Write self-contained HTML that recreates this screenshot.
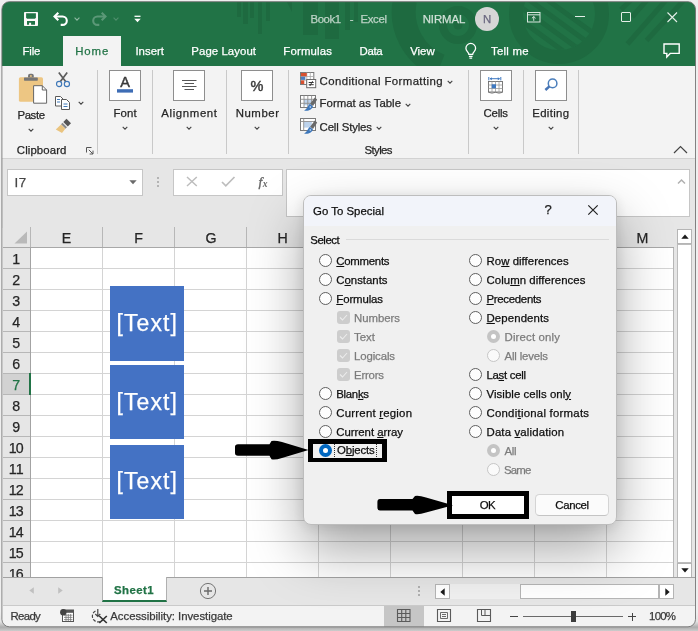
<!DOCTYPE html>
<html lang="en"><head><meta charset="utf-8"><title>Book1 - Excel</title>
<style>
html,body{margin:0;padding:0;}
body{width:698px;height:631px;overflow:hidden;background:#f4f4f4;font-family:"Liberation Sans",sans-serif;position:relative;}
#win{position:absolute;left:0;top:0;width:698px;height:631px;overflow:hidden;will-change:transform;}
.a{position:absolute;box-sizing:border-box;}
.t{white-space:pre;-webkit-text-stroke:0.25px;}
u{text-decoration:underline;text-underline-offset:1px;text-decoration-thickness:1px;}
svg{position:absolute;overflow:visible;}

</style></head>
<body>
<div id="win">
<div class="a" style="left:0px;top:0px;width:698px;height:66px;background:#217346;"></div>
<svg style="left:0;top:0" width="698" height="66" viewBox="0 0 698 66"><defs><clipPath id="rc"><circle cx="559" cy="14" r="36"/></clipPath></defs><g fill="#1e6a40" stroke="none">
<rect x="237" y="0" width="4" height="17"/><rect x="243" y="0" width="5" height="24"/><rect x="250" y="0" width="4" height="18"/><rect x="258" y="0" width="4" height="34"/><rect x="266" y="0" width="4" height="21"/>
<path d="M286 0H292V12Z"/>
<rect x="303" y="0" width="15" height="35"/><rect x="325" y="0" width="14" height="39"/><rect x="345" y="0" width="5" height="30"/><rect x="354" y="0" width="4" height="22"/>
<circle cx="458" cy="25" r="4.500"/>
</g>
<g fill="none" stroke="#1e6a40">
<circle cx="458" cy="25" r="15" stroke-width="8"/>
<path d="M405 0A58 58 0 0 0 440 66" stroke-width="24"/>
<circle cx="559" cy="14" r="43" stroke-width="14"/>
<g stroke-width="5" clip-path="url(#rc)"><path d="M500 -8 L580 50"/><path d="M510 -14 L590 44"/><path d="M520 -20 L600 38"/><path d="M490 -2 L570 56"/><path d="M480 4 L560 62"/></g>
<g stroke-width="5"><path d="M666 0L627.500 44"/><path d="M684 0L646.500 40.500"/><path d="M647 0L632 17"/><path d="M632 -1L621 9.500"/></g>
</g></svg>
<svg style="left:24px;top:12px" width="14" height="14" viewBox="0 0 14 14"><rect x="0" y="0" width="14" height="14" rx=".8" fill="#fbf8f8"/><path d="M2.100 1.200H11.900V5.500L11 6.700H3L2.100 5.500Z" fill="#217346"/><path d="M3 8.900H11V12.700H7.100V10.800H5.100V12.700H3Z" fill="#217346"/></svg>
<svg style="left:52px;top:10px" width="18" height="17" viewBox="0 0 18 17"><g fill="none" stroke="#fff" stroke-width="2.100"><path d="M6.300 2.700L2.500 6.500L6.300 10.300"/><path d="M3 6.500H10.600A4.200 4.200 0 0 1 10.600 14.900H8.700"/></g></svg>
<svg style="left:73px;top:15.500px" width="8" height="6" viewBox="0 0 8 6"><path d="M1.600 1.700L4 4.100L6.400 1.700" fill="none" stroke="#8fb9a2" stroke-width="1.100"/></svg>
<svg style="left:90px;top:10px" width="18" height="17" viewBox="0 0 18 17"><g fill="none" stroke="#5b9877" stroke-width="2.100"><path d="M11.700 2.700L15.500 6.500L11.700 10.300"/><path d="M15 6.500H7.400A4.200 4.200 0 0 0 7.400 14.900H9.300"/></g></svg>
<svg style="left:112px;top:15.500px" width="8" height="6" viewBox="0 0 8 6"><path d="M1.600 1.700L4 4.100L6.400 1.700" fill="none" stroke="#4f8e6c" stroke-width="1.100"/></svg>
<svg style="left:134px;top:15px" width="7" height="8" viewBox="0 0 7 8"><path d="M0.500 1.300H6.500" stroke="#fff" stroke-width="1.300"/><path d="M0.300 3.800H6.700L3.500 7.200Z" fill="#fff"/></svg>
<div class="a t" style="left:310.5px;top:12px;height:15px;line-height:15px;font-size:11.4px;color:#bdd3c6;letter-spacing:-0.453px;">Book1</div>
<div class="a t" style="left:349.8515625px;top:12px;height:15px;line-height:15px;font-size:11.4px;color:#bdd3c6;letter-spacing:0.000px;">-</div>
<div class="a t" style="left:360.5px;top:12px;height:15px;line-height:15px;font-size:11.4px;color:#bdd3c6;letter-spacing:-0.340px;">Excel</div>
<div class="a t" style="left:422.7px;top:12px;height:15px;line-height:15px;font-size:11.4px;color:#cfe0d6;letter-spacing:-0.089px;">NIRMAL</div>
<div class="a" style="left:475px;top:7px;width:24px;height:24px;background:#d6d6d6;border-radius:50%;"></div>
<div class="a t" style="left:482.8828125px;top:12px;height:15px;line-height:15px;font-size:11.4px;color:#6b6880;letter-spacing:0.000px;">N</div>
<svg style="left:527px;top:12px" width="14" height="11" viewBox="0 0 14 11"><g fill="none" stroke="#d8e6de" stroke-width="1"><rect x="0.500" y="0.500" width="12.500" height="9.500"/><path d="M0.500 2.800H13"/><path d="M6.750 8.800V4.600M4.900 6.300L6.750 4.500L8.600 6.300"/></g></svg>
<div class="a" style="left:575px;top:16px;width:10px;height:1px;background:#e4eee8;"></div>
<div class="a" style="left:621px;top:12px;width:10px;height:10px;border:1px solid #e4eee8;border-radius:1px;"></div>
<svg style="left:667px;top:12px" width="11" height="11" viewBox="0 0 11 11"><path d="M0.500 0.500L10 10M10 0.500L0.500 10" stroke="#e4eee8" stroke-width="1.100" fill="none"/></svg>
<div class="a" style="left:63px;top:36px;width:58px;height:30px;background:#f3f3f3;"></div>
<div class="a t" style="left:22.6px;top:44px;height:15px;line-height:15px;font-size:11.4px;color:#fff;letter-spacing:-0.220px;">File</div>
<div class="a t" style="left:75.2046875px;top:44px;height:15px;line-height:15px;font-size:11.4px;color:#217346;letter-spacing:0.900px;">Home</div>
<div class="a t" style="left:135.4px;top:44px;height:15px;line-height:15px;font-size:11.4px;color:#fff;letter-spacing:0.020px;">Insert</div>
<div class="a t" style="left:191.3px;top:44px;height:15px;line-height:15px;font-size:11.4px;color:#fff;letter-spacing:0.073px;">Page Layout</div>
<div class="a t" style="left:283.3px;top:44px;height:15px;line-height:15px;font-size:11.4px;color:#fff;letter-spacing:0.174px;">Formulas</div>
<div class="a t" style="left:359.5px;top:44px;height:15px;line-height:15px;font-size:11.4px;color:#fff;letter-spacing:-0.321px;">Data</div>
<div class="a t" style="left:410.2px;top:44px;height:15px;line-height:15px;font-size:11.4px;color:#fff;letter-spacing:0.005px;">View</div>
<svg style="left:464.500px;top:43.300px" width="11.900" height="16.500" viewBox="0 0 13 18"><g fill="none" stroke="#fff" stroke-width="1.400"><path d="M4.200 12.300C4.200 10 1 9 1 5.800A5.300 5.300 0 0 1 11.600 5.800C11.600 9 8.400 10 8.400 12.300Z"/><path d="M4.300 14.500H8.300M4.800 16.600H7.800"/></g></svg>
<div class="a t" style="left:491.0px;top:44px;height:15px;line-height:15px;font-size:11.4px;color:#fff;letter-spacing:0.234px;">Tell me</div>
<svg style="left:663.400px;top:42.500px" width="18" height="16" viewBox="0 0 18 16"><path d="M1 1H16.200V10.400H7.200L3.800 13.900V10.400H1Z" fill="none" stroke="#fff" stroke-width="1.400"/></svg>
<div class="a" style="left:0px;top:66px;width:698px;height:92px;background:#f3f3f3;"></div>
<div class="a" style="left:0px;top:158px;width:698px;height:1px;background:#d2d2d2;"></div>
<div class="a" style="left:0px;top:159px;width:698px;height:69px;background:#e6e6e6;"></div>
<div class="a" style="left:97px;top:70px;width:1px;height:84px;background:#c9c9c9;"></div>
<div class="a" style="left:152px;top:70px;width:1px;height:84px;background:#c9c9c9;"></div>
<div class="a" style="left:226px;top:70px;width:1px;height:84px;background:#c9c9c9;"></div>
<div class="a" style="left:288px;top:70px;width:1px;height:84px;background:#c9c9c9;"></div>
<div class="a" style="left:468px;top:70px;width:1px;height:84px;background:#c9c9c9;"></div>
<div class="a" style="left:523px;top:70px;width:1px;height:84px;background:#c9c9c9;"></div>
<div class="a" style="left:578px;top:70px;width:1px;height:84px;background:#c9c9c9;"></div>
<svg style="left:18px;top:72px" width="30" height="32" viewBox="0 0 30 32">
<rect x="0.900" y="5.200" width="24.100" height="24.600" rx="1.600" fill="#edc683"/>
<rect x="6" y="5.400" width="13.800" height="3.300" rx=".6" fill="#767676"/><path d="M10 5.600V3.700Q10 1.700 12 1.700H13.800Q15.800 1.700 15.800 3.700V5.600Z" fill="#767676"/><rect x="12" y="3.200" width="1.800" height="1.600" fill="#edc683"/>
<path d="M15.600 13.700H24.300L28.600 18V31.200H15.600Z" fill="#fff" stroke="#666" stroke-width="1"/><path d="M24.300 13.700V18H28.600" fill="none" stroke="#666"/></svg>
<div class="a t" style="left:17.5px;top:108px;height:15px;line-height:15px;font-size:11.4px;color:#262626;letter-spacing:-0.410px;">Paste</div>
<svg style="left:27px;top:127px" width="8" height="6" viewBox="0 0 8 6"><path d="M1.700 1.800L4 4.100L6.300 1.800" fill="none" stroke="#444" stroke-width="1.100"/></svg>
<svg style="left:55px;top:71px" width="16" height="17" viewBox="0 0 16 17"><g fill="none"><path d="M3.800 1.500L10.800 10.800M12.200 1.500L5.200 10.800" stroke="#5c5c5c" stroke-width="1.700"/><circle cx="4.100" cy="13" r="2.600" stroke="#3f78b8" stroke-width="1.150"/><circle cx="11.900" cy="13" r="2.600" stroke="#3f78b8" stroke-width="1.150"/></g></svg>
<svg style="left:55px;top:96px" width="16" height="15" viewBox="0 0 16 15"><g fill="#fff" stroke="#5a5a5a"><path d="M0.500 0.500H5.500L8 3V10H0.500Z"/><path d="M6.500 3.500H11.500L14.500 6.500V13.500H6.500Z"/></g><path d="M2 3.500H5M2 6H5M8.500 8H12.500M8.500 10.500H12.500" stroke="#3f78b8"/></svg>
<svg style="left:77px;top:100px" width="8" height="6" viewBox="0 0 8 6"><path d="M1.700 1.800L4 4.100L6.300 1.800" fill="none" stroke="#444" stroke-width="1.100"/></svg>
<svg style="left:55px;top:118px" width="17" height="16" viewBox="0 0 17 16"><path d="M11.500 0.800L16 5.300L12.800 8.500L8.300 4Z" fill="#555"/><path d="M7.500 4.800L12 9.300L10.500 10.800L6 6.300Z" fill="#888"/><path d="M6 6.500L10.300 10.800L7 15L0.800 11.500Z" fill="#eac47f"/></svg>
<div class="a t" style="left:16.8px;top:143px;height:15px;line-height:15px;font-size:11.4px;color:#262626;letter-spacing:0.104px;">Clipboard</div>
<svg style="left:86px;top:147px" width="8" height="8" viewBox="0 0 8 8"><path d="M0.500 5.500V0.500H5.500" fill="none" stroke="#555"/><path d="M2.800 2.800L7 7M7 3.600V7H3.600" fill="none" stroke="#555"/></svg>
<div class="a" style="left:109px;top:70px;width:32px;height:31px;background:#fff;border:1px solid #8e8e8e;"></div>
<svg style="left:109px;top:70px" width="32" height="31" viewBox="0 0 32 31"><text x="16" y="17.200" text-anchor="middle" font-family="Liberation Sans, sans-serif" font-size="14.500" fill="#3a3a3a" stroke="#3a3a3a" stroke-width=".45">A</text><rect x="8" y="19.200" width="16" height="3.400" fill="#3e6db5"/></svg>
<div class="a t" style="left:113.6px;top:106px;height:15px;line-height:15px;font-size:11.4px;color:#262626;letter-spacing:0.068px;">Font</div>
<svg style="left:121px;top:125.30000000000001px" width="8" height="6" viewBox="0 0 8 6"><path d="M1.700 1.800L4 4.100L6.300 1.800" fill="none" stroke="#444" stroke-width="1.100"/></svg>
<div class="a" style="left:173px;top:70px;width:32px;height:31px;background:#fff;border:1px solid #8e8e8e;"></div>
<svg style="left:173px;top:70px" width="32" height="31" viewBox="0 0 32 31"><path d="M9 10.500H23.500M11.500 13.500H21M9 16.500H23.500M11.500 19.500H21" stroke="#555" stroke-width="1"/></svg>
<div class="a t" style="left:161.3px;top:106px;height:15px;line-height:15px;font-size:11.4px;color:#262626;letter-spacing:0.630px;">Alignment</div>
<svg style="left:185px;top:125.30000000000001px" width="8" height="6" viewBox="0 0 8 6"><path d="M1.700 1.800L4 4.100L6.300 1.800" fill="none" stroke="#444" stroke-width="1.100"/></svg>
<div class="a" style="left:241px;top:70px;width:32px;height:31px;background:#fff;border:1px solid #8e8e8e;"></div>
<svg style="left:241px;top:70px" width="32" height="31" viewBox="0 0 32 31"><text x="16" y="21" text-anchor="middle" font-family="Liberation Sans, sans-serif" font-size="14.500" fill="#3a3a3a" stroke="#3a3a3a" stroke-width=".45">%</text></svg>
<div class="a t" style="left:235.7px;top:106px;height:15px;line-height:15px;font-size:11.4px;color:#262626;letter-spacing:0.557px;">Number</div>
<svg style="left:253px;top:125.30000000000001px" width="8" height="6" viewBox="0 0 8 6"><path d="M1.700 1.800L4 4.100L6.300 1.800" fill="none" stroke="#444" stroke-width="1.100"/></svg>
<div class="a" style="left:480px;top:70px;width:32px;height:31px;background:#fff;border:1px solid #8e8e8e;"></div>
<svg style="left:480px;top:70px" width="32" height="31" viewBox="0 0 32 31"><rect x="8.500" y="11.500" width="14" height="10.500" fill="#fff" stroke="#6e6e6e" stroke-width=".9"/><path d="M8.500 15H22.500M8.500 18.500H22.500M12 11.500V22M15.500 11.500V22M19 11.500V22" fill="none" stroke="#9a9a9a" stroke-width=".8"/><path d="M8.500 22.300Q12 24 15.500 22.300Q19 24 22.500 22.300" fill="none" stroke="#6e6e6e" stroke-width=".9"/><rect x="11.700" y="14.300" width="4.300" height="4" fill="#3e78c0"/><path d="M8.800 7V10.400M20.800 7V10.400M10 8.700H19.600" fill="none" stroke="#3e78c0" stroke-width="1"/><path d="M9.600 8.700L11.800 7.200V10.200ZM20 8.700L17.800 7.200V10.200Z" fill="#3e78c0"/></svg>
<div class="a t" style="left:483.5px;top:106px;height:15px;line-height:15px;font-size:11.4px;color:#262626;letter-spacing:-0.207px;">Cells</div>
<svg style="left:492px;top:125.30000000000001px" width="8" height="6" viewBox="0 0 8 6"><path d="M1.700 1.800L4 4.100L6.300 1.800" fill="none" stroke="#444" stroke-width="1.100"/></svg>
<div class="a" style="left:535px;top:70px;width:32px;height:31px;background:#fff;border:1px solid #8e8e8e;"></div>
<svg style="left:535px;top:70px" width="32" height="31" viewBox="0 0 32 31"><circle cx="17.600" cy="13.400" r="4.300" fill="none" stroke="#4a7ebb" stroke-width="1.500"/><path d="M14.400 16.400L10.400 20" stroke="#4674b4" stroke-width="2.500"/></svg>
<div class="a t" style="left:532.3px;top:106px;height:15px;line-height:15px;font-size:11.4px;color:#262626;letter-spacing:0.309px;">Editing</div>
<svg style="left:547px;top:125.30000000000001px" width="8" height="6" viewBox="0 0 8 6"><path d="M1.700 1.800L4 4.100L6.300 1.800" fill="none" stroke="#444" stroke-width="1.100"/></svg>
<svg style="left:300px;top:72px" width="17" height="17" viewBox="0 0 17 17"><rect x="0.500" y="0.500" width="13.300" height="12" fill="#fff" stroke="#7a7a7a"/><path d="M0.500 4.500H13.800M0.500 8.200H13.800M6.800 0.500V12.500M10.300 0.500V12.500" stroke="#a8a8a8" stroke-width=".8" fill="none"/><rect x="1" y="1" width="5.800" height="3.300" fill="#d8502f"/><rect x="1" y="4.700" width="4.300" height="3.200" fill="#4a7dbd"/><rect x="1" y="8.400" width="3.300" height="3.600" fill="#d8502f"/><rect x="6.700" y="7.500" width="9" height="8.200" fill="#fff" stroke="#6a6a6a"/><path d="M8.700 10.500H13.700M8.700 12.700H13.700M12.600 9.200L9.800 14" stroke="#333" stroke-width="1" fill="none"/></svg>
<svg style="left:300px;top:95px" width="17" height="17" viewBox="0 0 17 17"><rect x="0.500" y="0.500" width="15" height="12" fill="#fff" stroke="#7a7a7a"/><rect x="4" y="4.300" width="7.500" height="6" fill="#bdd3ec"/><path d="M0.500 4.300H15.500M0.500 8.300H15.500M4 0.500V12.500M7.800 0.500V12.500M11.600 0.500V12.500" stroke="#8f8f8f" stroke-width=".9" fill="none"/><path d="M14.800 2.600L17.200 4.500L13 10.900L10.100 8.800Z" fill="#696969"/><path d="M9.800 8.900L12.900 11.200C12.400 14.200 8.400 16.500 4 15.500C7 14.300 7.300 11 9.800 8.900Z" fill="#3d77bb"/><circle cx="10.300" cy="12" r=".8" fill="#dfe9f5"/></svg>
<svg style="left:300px;top:118px" width="17" height="17" viewBox="0 0 17 17"><rect x="0.500" y="0.500" width="15" height="12" fill="#fff" stroke="#7a7a7a"/><rect x="3.800" y="3.600" width="8" height="6" fill="#bdd3ec"/><path d="M0.500 3.500H15.500M3.700 0.500V12.500" stroke="#8f8f8f" stroke-width=".9" fill="none"/><path d="M14.800 2.600L17.200 4.500L13 10.900L10.100 8.800Z" fill="#696969"/><path d="M9.800 8.900L12.900 11.200C12.400 14.200 8.400 16.500 4 15.500C7 14.300 7.300 11 9.800 8.900Z" fill="#3d77bb"/><circle cx="10.300" cy="12" r=".8" fill="#dfe9f5"/></svg>
<div class="a t" style="left:319.6px;top:74px;height:15px;line-height:15px;font-size:11.4px;color:#262626;letter-spacing:0.395px;">Conditional Formatting</div>
<svg style="left:446px;top:78.5px" width="8" height="6" viewBox="0 0 8 6"><path d="M1.700 1.800L4 4.100L6.300 1.800" fill="none" stroke="#444" stroke-width="1.100"/></svg>
<div class="a t" style="left:319.6px;top:96px;height:15px;line-height:15px;font-size:11.4px;color:#262626;letter-spacing:-0.005px;">Format as Table</div>
<svg style="left:404px;top:101.5px" width="8" height="6" viewBox="0 0 8 6"><path d="M1.700 1.800L4 4.100L6.300 1.800" fill="none" stroke="#444" stroke-width="1.100"/></svg>
<div class="a t" style="left:319.6px;top:120px;height:15px;line-height:15px;font-size:11.4px;color:#262626;letter-spacing:-0.141px;">Cell Styles</div>
<svg style="left:375px;top:124.5px" width="8" height="6" viewBox="0 0 8 6"><path d="M1.700 1.800L4 4.100L6.300 1.800" fill="none" stroke="#444" stroke-width="1.100"/></svg>
<div class="a t" style="left:364.5px;top:143px;height:15px;line-height:15px;font-size:11.4px;color:#262626;letter-spacing:-0.606px;">Styles</div>
<svg style="left:673px;top:145px" width="15" height="9" viewBox="0 0 15 9"><path d="M1 8L7.500 1.500L14 8" fill="none" stroke="#444" stroke-width="1.200"/></svg>
<div class="a" style="left:7px;top:169px;width:136px;height:27px;background:#fff;border:1px solid #c6c6c6;"></div>
<div class="a t" style="left:14.6px;top:174px;height:17px;line-height:17px;font-size:13.3px;color:#444;letter-spacing:0.406px;">I7</div>
<svg style="left:128.500px;top:180px" width="8" height="5" viewBox="0 0 8 5"><path d="M0.300 0.300H7.700L4 4.300Z" fill="#6a6a6a"/></svg>
<div class="a" style="left:156.5px;top:177px;width:2px;height:2px;background:#b4b4b4;"></div>
<div class="a" style="left:156.5px;top:181px;width:2px;height:2px;background:#b4b4b4;"></div>
<div class="a" style="left:156.5px;top:185px;width:2px;height:2px;background:#b4b4b4;"></div>
<div class="a" style="left:173px;top:169px;width:110px;height:27px;background:#fff;border:1px solid #c6c6c6;"></div>
<svg style="left:186px;top:176.300px" width="12" height="11" viewBox="0 0 12 11"><path d="M1 1L10.800 10M10.800 1L1 10" stroke="#bdbdbd" stroke-width="1.500" fill="none"/></svg>
<svg style="left:221px;top:176.300px" width="15" height="11" viewBox="0 0 15 11"><path d="M1 6L4.800 9.800L13.500 1" stroke="#bdbdbd" stroke-width="1.700" fill="none"/></svg>
<div class="a t" style="left:258.500px;top:172px;height:20px;line-height:20px;font-family:'Liberation Serif',serif;font-style:italic;font-weight:400;color:#666;font-size:13.500px;letter-spacing:0.500px;-webkit-text-stroke:0.350px">f<span style="font-size:9.500px;position:relative;top:0.500px;font-weight:700;-webkit-text-stroke:0">x</span></div>
<div class="a" style="left:286px;top:169px;width:404px;height:48px;background:#fff;border:1px solid #c6c6c6;"></div>
<svg style="left:677px;top:178px" width="9" height="7" viewBox="0 0 9 7"><path d="M1 5.500L4.500 2L8 5.500" fill="none" stroke="#b0b0b0" stroke-width="1.500"/></svg>
<div class="a" style="left:3px;top:228px;width:692px;height:349px;background:#e6e6e6;"></div>
<div class="a" style="left:31px;top:248px;width:643px;height:329px;background:#fff;"></div>
<div class="a" style="left:30px;top:248px;width:1px;height:329px;background:#a3a3a3;"></div>
<div class="a" style="left:30px;top:227px;width:1px;height:21px;background:#b7b7b7;"></div>
<div class="a" style="left:102px;top:248px;width:1px;height:329px;background:#d4d4d4;"></div>
<div class="a" style="left:102px;top:227px;width:1px;height:21px;background:#b7b7b7;"></div>
<div class="a" style="left:174px;top:248px;width:1px;height:329px;background:#d4d4d4;"></div>
<div class="a" style="left:174px;top:227px;width:1px;height:21px;background:#b7b7b7;"></div>
<div class="a" style="left:246px;top:248px;width:1px;height:329px;background:#d4d4d4;"></div>
<div class="a" style="left:246px;top:227px;width:1px;height:21px;background:#b7b7b7;"></div>
<div class="a" style="left:318px;top:248px;width:1px;height:329px;background:#d4d4d4;"></div>
<div class="a" style="left:318px;top:227px;width:1px;height:21px;background:#b7b7b7;"></div>
<div class="a" style="left:390px;top:248px;width:1px;height:329px;background:#d4d4d4;"></div>
<div class="a" style="left:390px;top:227px;width:1px;height:21px;background:#b7b7b7;"></div>
<div class="a" style="left:462px;top:248px;width:1px;height:329px;background:#d4d4d4;"></div>
<div class="a" style="left:462px;top:227px;width:1px;height:21px;background:#b7b7b7;"></div>
<div class="a" style="left:534px;top:248px;width:1px;height:329px;background:#d4d4d4;"></div>
<div class="a" style="left:534px;top:227px;width:1px;height:21px;background:#b7b7b7;"></div>
<div class="a" style="left:606px;top:248px;width:1px;height:329px;background:#d4d4d4;"></div>
<div class="a" style="left:606px;top:227px;width:1px;height:21px;background:#b7b7b7;"></div>
<div class="a" style="left:673px;top:248px;width:1px;height:329px;background:#b7b7b7;"></div>
<div class="a" style="left:3px;top:247px;width:671px;height:1px;background:#a8a8a8;"></div>
<div class="a" style="left:31px;top:268px;width:642px;height:1px;background:#d4d4d4;"></div>
<div class="a" style="left:3px;top:268px;width:27px;height:1px;background:#b7b7b7;"></div>
<div class="a" style="left:31px;top:289px;width:642px;height:1px;background:#d4d4d4;"></div>
<div class="a" style="left:3px;top:289px;width:27px;height:1px;background:#b7b7b7;"></div>
<div class="a" style="left:31px;top:310px;width:642px;height:1px;background:#d4d4d4;"></div>
<div class="a" style="left:3px;top:310px;width:27px;height:1px;background:#b7b7b7;"></div>
<div class="a" style="left:31px;top:331px;width:642px;height:1px;background:#d4d4d4;"></div>
<div class="a" style="left:3px;top:331px;width:27px;height:1px;background:#b7b7b7;"></div>
<div class="a" style="left:31px;top:352px;width:642px;height:1px;background:#d4d4d4;"></div>
<div class="a" style="left:3px;top:352px;width:27px;height:1px;background:#b7b7b7;"></div>
<div class="a" style="left:31px;top:373px;width:642px;height:1px;background:#d4d4d4;"></div>
<div class="a" style="left:3px;top:373px;width:27px;height:1px;background:#b7b7b7;"></div>
<div class="a" style="left:31px;top:394px;width:642px;height:1px;background:#d4d4d4;"></div>
<div class="a" style="left:3px;top:394px;width:27px;height:1px;background:#b7b7b7;"></div>
<div class="a" style="left:31px;top:415px;width:642px;height:1px;background:#d4d4d4;"></div>
<div class="a" style="left:3px;top:415px;width:27px;height:1px;background:#b7b7b7;"></div>
<div class="a" style="left:31px;top:436px;width:642px;height:1px;background:#d4d4d4;"></div>
<div class="a" style="left:3px;top:436px;width:27px;height:1px;background:#b7b7b7;"></div>
<div class="a" style="left:31px;top:457px;width:642px;height:1px;background:#d4d4d4;"></div>
<div class="a" style="left:3px;top:457px;width:27px;height:1px;background:#b7b7b7;"></div>
<div class="a" style="left:31px;top:478px;width:642px;height:1px;background:#d4d4d4;"></div>
<div class="a" style="left:3px;top:478px;width:27px;height:1px;background:#b7b7b7;"></div>
<div class="a" style="left:31px;top:499px;width:642px;height:1px;background:#d4d4d4;"></div>
<div class="a" style="left:3px;top:499px;width:27px;height:1px;background:#b7b7b7;"></div>
<div class="a" style="left:31px;top:520px;width:642px;height:1px;background:#d4d4d4;"></div>
<div class="a" style="left:3px;top:520px;width:27px;height:1px;background:#b7b7b7;"></div>
<div class="a" style="left:31px;top:541px;width:642px;height:1px;background:#d4d4d4;"></div>
<div class="a" style="left:3px;top:541px;width:27px;height:1px;background:#b7b7b7;"></div>
<div class="a" style="left:31px;top:562px;width:642px;height:1px;background:#d4d4d4;"></div>
<div class="a" style="left:3px;top:562px;width:27px;height:1px;background:#b7b7b7;"></div>
<svg style="left:14px;top:231px" width="14" height="13" viewBox="0 0 14 13"><path d="M13 0.500V12.500H0.500Z" fill="#b9b9b9"/></svg>
<div class="a t" style="left:61.765625px;top:229px;height:18px;line-height:18px;font-size:14.2px;color:#262626;letter-spacing:0.000px;">E</div>
<div class="a t" style="left:134.1640625px;top:229px;height:18px;line-height:18px;font-size:14.2px;color:#262626;letter-spacing:0.000px;">F</div>
<div class="a t" style="left:205.4765625px;top:229px;height:18px;line-height:18px;font-size:14.2px;color:#262626;letter-spacing:0.000px;">G</div>
<div class="a t" style="left:277.375px;top:229px;height:18px;line-height:18px;font-size:14.2px;color:#262626;letter-spacing:0.000px;">H</div>
<div class="a t" style="left:636.4859375px;top:229px;height:18px;line-height:18px;font-size:14.2px;color:#262626;letter-spacing:0.000px;">M</div>
<div class="a" style="left:3px;top:374px;width:27px;height:20px;background:#d2d2d2;"></div>
<div class="a" style="left:29px;top:373px;width:2px;height:22px;background:#217346;"></div>
<div class="a t" style="left:12.2546875px;top:250px;height:18px;line-height:18px;font-size:14.2px;color:#262626;letter-spacing:0.000px;">1</div>
<div class="a t" style="left:12.2546875px;top:271px;height:18px;line-height:18px;font-size:14.2px;color:#262626;letter-spacing:0.000px;">2</div>
<div class="a t" style="left:12.2546875px;top:292px;height:18px;line-height:18px;font-size:14.2px;color:#262626;letter-spacing:0.000px;">3</div>
<div class="a t" style="left:12.2546875px;top:313px;height:18px;line-height:18px;font-size:14.2px;color:#262626;letter-spacing:0.000px;">4</div>
<div class="a t" style="left:12.2546875px;top:334px;height:18px;line-height:18px;font-size:14.2px;color:#262626;letter-spacing:0.000px;">5</div>
<div class="a t" style="left:12.2546875px;top:355px;height:18px;line-height:18px;font-size:14.2px;color:#262626;letter-spacing:0.000px;">6</div>
<div class="a t" style="left:12.2546875px;top:376px;height:18px;line-height:18px;font-size:14.2px;color:#217346;letter-spacing:0.000px;">7</div>
<div class="a t" style="left:12.2546875px;top:397px;height:18px;line-height:18px;font-size:14.2px;color:#262626;letter-spacing:0.000px;">8</div>
<div class="a t" style="left:12.2546875px;top:418px;height:18px;line-height:18px;font-size:14.2px;color:#262626;letter-spacing:0.000px;">9</div>
<div class="a t" style="left:8.684375px;top:439px;height:18px;line-height:18px;font-size:14.2px;color:#262626;letter-spacing:-0.750px;">10</div>
<div class="a t" style="left:8.7px;top:460px;height:18px;line-height:18px;font-size:14.2px;color:#262626;letter-spacing:0.266px;">11</div>
<div class="a t" style="left:8.684375px;top:481px;height:18px;line-height:18px;font-size:14.2px;color:#262626;letter-spacing:-0.750px;">12</div>
<div class="a t" style="left:8.684375px;top:502px;height:18px;line-height:18px;font-size:14.2px;color:#262626;letter-spacing:-0.750px;">13</div>
<div class="a t" style="left:8.684375px;top:523px;height:18px;line-height:18px;font-size:14.2px;color:#262626;letter-spacing:-0.750px;">14</div>
<div class="a t" style="left:8.684375px;top:544px;height:18px;line-height:18px;font-size:14.2px;color:#262626;letter-spacing:-0.750px;">15</div>
<div class="a t" style="left:8.684375px;top:565px;height:18px;line-height:18px;font-size:14.2px;color:#262626;letter-spacing:-0.750px;">16</div>
<div class="a" style="left:110px;top:286px;width:74px;height:75px;background:#4472c4;"></div>
<div class="a t" style="left:116.6px;top:308px;height:30px;line-height:30px;font-size:23px;color:#fff;letter-spacing:1.046px;">[Text]</div>
<div class="a" style="left:110px;top:365px;width:74px;height:74px;background:#4472c4;"></div>
<div class="a t" style="left:116.6px;top:387px;height:30px;line-height:30px;font-size:23px;color:#fff;letter-spacing:1.046px;">[Text]</div>
<div class="a" style="left:110px;top:445px;width:74px;height:74px;background:#4472c4;"></div>
<div class="a t" style="left:116.6px;top:466px;height:30px;line-height:30px;font-size:23px;color:#fff;letter-spacing:1.046px;">[Text]</div>
<div class="a" style="left:677px;top:229px;width:15px;height:15px;background:#fff;border:1px solid #b5b5b5;"></div>
<svg style="left:680.500px;top:234px" width="8" height="5" viewBox="0 0 8 5"><path d="M0.300 4.800L4 0.500L7.700 4.800Z" fill="#1a1a1a"/></svg>
<div class="a" style="left:677px;top:244px;width:15px;height:319px;background:#fff;border:1px solid #bcbcbc;"></div>
<div class="a" style="left:677px;top:563px;width:15px;height:15px;background:#fff;border:1px solid #b5b5b5;"></div>
<svg style="left:680.500px;top:568px" width="8" height="5" viewBox="0 0 8 5"><path d="M0.300 0.200L4 4.500L7.700 0.200Z" fill="#1a1a1a"/></svg>
<div class="a" style="left:3px;top:577px;width:692px;height:28px;background:#e6e6e6;"></div>
<div class="a" style="left:3px;top:577px;width:692px;height:1px;background:#a2a2a2;"></div>
<svg style="left:28.500px;top:587px" width="5" height="7" viewBox="0 0 5 7"><path d="M4.800 0.200V6.800L0.300 3.500Z" fill="#c0c0c0"/></svg>
<svg style="left:57.500px;top:587px" width="5" height="7" viewBox="0 0 5 7"><path d="M0.200 0.200V6.800L4.700 3.500Z" fill="#c0c0c0"/></svg>
<div class="a" style="left:102px;top:577px;width:65px;height:25px;background:#fff;border-left:1px solid #b0b0b0;border-right:1px solid #b0b0b0;border-bottom:2px solid #217346;"></div>
<div class="a t" style="left:114.0px;top:583px;height:15px;line-height:15px;font-size:11.4px;color:#217346;letter-spacing:0.468px;font-weight:700;">Sheet1</div>
<svg style="left:199px;top:582px" width="18" height="18" viewBox="0 0 18 18"><circle cx="9" cy="9" r="7.600" fill="none" stroke="#757575" stroke-width="1"/><path d="M9 5V13M5 9H13" stroke="#6a6a6a" stroke-width="1.400"/></svg>
<div class="a" style="left:418px;top:586px;width:2px;height:2px;background:#b0b0b0;"></div>
<div class="a" style="left:418px;top:590px;width:2px;height:2px;background:#b0b0b0;"></div>
<div class="a" style="left:418px;top:594px;width:2px;height:2px;background:#b0b0b0;"></div>
<div class="a" style="left:450px;top:584px;width:209px;height:15px;background:#f0f0f0;"></div>
<div class="a" style="left:435px;top:584px;width:15px;height:15px;background:#fff;border:1px solid #b5b5b5;"></div>
<svg style="left:439.500px;top:587.500px" width="5" height="8" viewBox="0 0 5 8"><path d="M4.700 0.200V7.800L0.300 4Z" fill="#1a1a1a"/></svg>
<div class="a" style="left:520px;top:584px;width:139px;height:15px;background:#fff;border:1px solid #b5b5b5;"></div>
<div class="a" style="left:659px;top:584px;width:15px;height:15px;background:#fff;border:1px solid #b5b5b5;"></div>
<svg style="left:664.500px;top:587.500px" width="5" height="8" viewBox="0 0 5 8"><path d="M0.300 0.200V7.800L4.700 4Z" fill="#1a1a1a"/></svg>
<div class="a" style="left:3px;top:605px;width:692px;height:22px;background:#f3f3f3;"></div>
<div class="a" style="left:3px;top:605px;width:692px;height:1px;background:#cacaca;"></div>
<div class="a t" style="left:10.5px;top:609px;height:15px;line-height:15px;font-size:11.4px;color:#3a3a3a;letter-spacing:-0.659px;">Ready</div>
<svg style="left:59.500px;top:609px" width="14" height="13" viewBox="0 0 14 13"><rect x="2.500" y="1" width="11" height="11.500" fill="#fff" stroke="#555"/><rect x="2.500" y="1" width="11" height="2.800" fill="#555"/><path d="M4 6.200H12.500M4 8.400H12.500M4 10.600H12.500M6 5V12M8.300 5V12M10.600 5V12" stroke="#777" stroke-width=".8"/><circle cx="3.300" cy="3.300" r="3.200" fill="#444"/></svg>
<svg style="left:90px;top:608px" width="18" height="16" viewBox="0 0 18 16"><path d="M5.500 3A5.800 5.800 0 1 0 12.500 12" fill="none" stroke="#444" stroke-width="1.200" stroke-dasharray="3.200 1.500"/><path d="M7.800 1V8.500M5.300 6L7.800 8.500L10.300 6" fill="none" stroke="#444" stroke-width="1.200"/><path d="M9.300 8L16.800 15M16.800 8L9.300 15" stroke="#333" stroke-width="1.700"/></svg>
<div class="a t" style="left:110.3px;top:609px;height:15px;line-height:15px;font-size:11.4px;color:#3a3a3a;letter-spacing:-0.042px;">Accessibility: Investigate</div>
<div class="a" style="left:384px;top:606px;width:40px;height:21px;background:#c6c6c6;"></div>
<svg style="left:397px;top:609px" width="14" height="13" viewBox="0 0 14 13"><path d="M0.500 0.500H13V12.500H0.500ZM0.500 4.500H13M0.500 8.500H13M4.700 0.500V12.500M8.800 0.500V12.500" fill="none" stroke="#5a5a5a" stroke-width="1.100"/></svg>
<svg style="left:437px;top:609px" width="15" height="14" viewBox="0 0 15 14"><path d="M0.500 0.500H13.500V12.500H0.500Z" fill="none" stroke="#5a5a5a" stroke-width="1.100"/><path d="M3.500 3.500H10.500V9.500H3.500ZM5 5.500H9M5 7.500H9" fill="none" stroke="#5a5a5a" stroke-width=".9"/></svg>
<svg style="left:477px;top:609px" width="15" height="14" viewBox="0 0 15 14"><path d="M0.500 0.500H13.500V12.500H0.500Z" fill="none" stroke="#5a5a5a" stroke-width="1.100"/><path d="M4.500 0.500V6.500H13.500M8 0.500V6.500" fill="none" stroke="#5a5a5a"/></svg>
<div class="a" style="left:510px;top:616px;width:8px;height:1px;background:#444;"></div>
<div class="a" style="left:523px;top:616px;width:100px;height:1px;background:#6a6a6a;"></div>
<div class="a" style="left:571px;top:611px;width:5px;height:11px;background:#3c3c3c;"></div>
<div class="a" style="left:628px;top:616px;width:8px;height:1px;background:#444;"></div>
<div class="a" style="left:631.5px;top:612.5px;width:1px;height:8px;background:#444;"></div>
<div class="a t" style="left:649.0546875px;top:609px;height:15px;line-height:15px;font-size:11.4px;color:#3a3a3a;letter-spacing:-0.750px;">100%</div>
<div class="a" style="left:303px;top:195px;width:314px;height:330px;background:#f0f0f0;border-radius:8px;border:1px solid #bdbdbd;box-shadow:0 25px 54px rgba(0,0,0,.35),0 2px 14px rgba(0,0,0,.10);overflow:hidden;"><div class="a" style="left:0;top:0;width:312px;height:30px;background:#f2f4fa"></div></div>
<div class="a t" style="left:313.0px;top:204px;height:15px;line-height:15px;font-size:11.4px;color:#0e0e0e;letter-spacing:0.023px;">Go To Special</div>
<div class="a t" style="left:544.3828125px;top:201px;height:17px;line-height:17px;font-size:13px;color:#222;letter-spacing:0.000px;">?</div>
<svg style="left:588px;top:205px" width="10" height="10" viewBox="0 0 10 10"><path d="M0.300 0.300L9.700 9.700M9.700 0.300L0.300 9.700" stroke="#222" stroke-width="1.200" fill="none"/></svg>
<div class="a t" style="left:310.3px;top:233px;height:15px;line-height:15px;font-size:11.4px;color:#0e0e0e;letter-spacing:-0.454px;">Select</div>
<div class="a" style="left:346px;top:239px;width:263px;height:1px;background:#dadada;"></div>
<div class="a" style="left:319.0px;top:254.10000000000002px;width:13px;height:13px;background:#fdfdfd;border:1px solid #5f5f5f;border-radius:50%;"></div>
<div class="a t" style="left:336.3px;top:254px;height:15px;line-height:15px;font-size:11.4px;color:#0e0e0e;letter-spacing:-0.268px;"><u>C</u>omments</div>
<div class="a" style="left:319.0px;top:273.13px;width:13px;height:13px;background:#fdfdfd;border:1px solid #5f5f5f;border-radius:50%;"></div>
<div class="a t" style="left:336.3px;top:273px;height:15px;line-height:15px;font-size:11.4px;color:#0e0e0e;letter-spacing:-0.012px;">C<u>o</u>nstants</div>
<div class="a" style="left:319.0px;top:292.16px;width:13px;height:13px;background:#fdfdfd;border:1px solid #5f5f5f;border-radius:50%;"></div>
<div class="a t" style="left:336.3px;top:292px;height:15px;line-height:15px;font-size:11.4px;color:#0e0e0e;letter-spacing:-0.112px;"><u>F</u>ormulas</div>
<div class="a" style="left:319.0px;top:387.31000000000006px;width:13px;height:13px;background:#fdfdfd;border:1px solid #5f5f5f;border-radius:50%;"></div>
<div class="a t" style="left:336.3px;top:387px;height:15px;line-height:15px;font-size:11.4px;color:#0e0e0e;letter-spacing:-0.301px;">Blan<u>k</u>s</div>
<div class="a" style="left:319.0px;top:406.34000000000003px;width:13px;height:13px;background:#fdfdfd;border:1px solid #5f5f5f;border-radius:50%;"></div>
<div class="a t" style="left:336.3px;top:406px;height:15px;line-height:15px;font-size:11.4px;color:#0e0e0e;letter-spacing:0.222px;">Current <u>r</u>egion</div>
<div class="a" style="left:319.0px;top:425.37px;width:13px;height:13px;background:#fdfdfd;border:1px solid #5f5f5f;border-radius:50%;"></div>
<div class="a t" style="left:336.3px;top:425px;height:15px;line-height:15px;font-size:11.4px;color:#0e0e0e;letter-spacing:-0.034px;">Current <u>a</u>rray</div>
<div class="a" style="left:337.0px;top:311.19000000000005px;width:13px;height:13px;background:#cdcdcd;border-radius:3px;"></div>
<svg style="left:339.0px;top:314.19000000000005px" width="9" height="7" viewBox="0 0 9 7"><path d="M1 3.500L3.500 6L8 1" fill="none" stroke="#ececec" stroke-width="1.100"/></svg>
<div class="a t" style="left:354.0px;top:311px;height:15px;line-height:15px;font-size:11.4px;color:#7c7c7c;letter-spacing:-0.036px;">Numbers</div>
<div class="a" style="left:337.0px;top:330.22px;width:13px;height:13px;background:#cdcdcd;border-radius:3px;"></div>
<svg style="left:339.0px;top:333.22px" width="9" height="7" viewBox="0 0 9 7"><path d="M1 3.500L3.500 6L8 1" fill="none" stroke="#ececec" stroke-width="1.100"/></svg>
<div class="a t" style="left:354.0px;top:330px;height:15px;line-height:15px;font-size:11.4px;color:#7c7c7c;letter-spacing:0.036px;">Text</div>
<div class="a" style="left:337.0px;top:349.25px;width:13px;height:13px;background:#cdcdcd;border-radius:3px;"></div>
<svg style="left:339.0px;top:352.25px" width="9" height="7" viewBox="0 0 9 7"><path d="M1 3.500L3.500 6L8 1" fill="none" stroke="#ececec" stroke-width="1.100"/></svg>
<div class="a t" style="left:354.0px;top:349px;height:15px;line-height:15px;font-size:11.4px;color:#7c7c7c;letter-spacing:-0.114px;">Logicals</div>
<div class="a" style="left:337.0px;top:368.28000000000003px;width:13px;height:13px;background:#cdcdcd;border-radius:3px;"></div>
<svg style="left:339.0px;top:371.28000000000003px" width="9" height="7" viewBox="0 0 9 7"><path d="M1 3.500L3.500 6L8 1" fill="none" stroke="#ececec" stroke-width="1.100"/></svg>
<div class="a t" style="left:354.0px;top:368px;height:15px;line-height:15px;font-size:11.4px;color:#7c7c7c;letter-spacing:-0.203px;">Errors</div>
<div class="a" style="left:469.0px;top:254.10000000000002px;width:13px;height:13px;background:#fdfdfd;border:1px solid #5f5f5f;border-radius:50%;"></div>
<div class="a t" style="left:486.5px;top:254px;height:15px;line-height:15px;font-size:11.4px;color:#0e0e0e;letter-spacing:0.045px;">Ro<u>w</u> differences</div>
<div class="a" style="left:469.0px;top:273.13px;width:13px;height:13px;background:#fdfdfd;border:1px solid #5f5f5f;border-radius:50%;"></div>
<div class="a t" style="left:486.5px;top:273px;height:15px;line-height:15px;font-size:11.4px;color:#0e0e0e;letter-spacing:0.057px;">Colu<u>m</u>n differences</div>
<div class="a" style="left:469.0px;top:292.16px;width:13px;height:13px;background:#fdfdfd;border:1px solid #5f5f5f;border-radius:50%;"></div>
<div class="a t" style="left:486.5px;top:292px;height:15px;line-height:15px;font-size:11.4px;color:#0e0e0e;letter-spacing:-0.292px;"><u>P</u>recedents</div>
<div class="a" style="left:469.0px;top:311.19000000000005px;width:13px;height:13px;background:#fdfdfd;border:1px solid #5f5f5f;border-radius:50%;"></div>
<div class="a t" style="left:486.5px;top:311px;height:15px;line-height:15px;font-size:11.4px;color:#0e0e0e;letter-spacing:0.118px;"><u>D</u>ependents</div>
<div class="a" style="left:469.0px;top:368.28000000000003px;width:13px;height:13px;background:#fdfdfd;border:1px solid #5f5f5f;border-radius:50%;"></div>
<div class="a t" style="left:486.5px;top:368px;height:15px;line-height:15px;font-size:11.4px;color:#0e0e0e;letter-spacing:-0.287px;">La<u>s</u>t cell</div>
<div class="a" style="left:469.0px;top:387.31000000000006px;width:13px;height:13px;background:#fdfdfd;border:1px solid #5f5f5f;border-radius:50%;"></div>
<div class="a t" style="left:486.5px;top:387px;height:15px;line-height:15px;font-size:11.4px;color:#0e0e0e;letter-spacing:0.066px;">Visible cells onl<u>y</u></div>
<div class="a" style="left:469.0px;top:406.34000000000003px;width:13px;height:13px;background:#fdfdfd;border:1px solid #5f5f5f;border-radius:50%;"></div>
<div class="a t" style="left:486.5px;top:406px;height:15px;line-height:15px;font-size:11.4px;color:#0e0e0e;letter-spacing:0.242px;">Condi<u>t</u>ional formats</div>
<div class="a" style="left:469.0px;top:425.37px;width:13px;height:13px;background:#fdfdfd;border:1px solid #5f5f5f;border-radius:50%;"></div>
<div class="a t" style="left:486.5px;top:425px;height:15px;line-height:15px;font-size:11.4px;color:#0e0e0e;letter-spacing:0.153px;">Data <u>v</u>alidation</div>
<div class="a" style="left:487.0px;top:330.22px;width:13px;height:13px;background:#c4c4c4;border-radius:50%;"></div>
<div class="a" style="left:491.0px;top:334.22px;width:5px;height:5px;background:#fff;border-radius:50%;"></div>
<div class="a t" style="left:504.5px;top:330px;height:15px;line-height:15px;font-size:11.4px;color:#7c7c7c;letter-spacing:0.169px;">Direct only</div>
<div class="a" style="left:487.0px;top:349.25px;width:13px;height:13px;background:#fafafa;border:1px solid #c6c6c6;border-radius:50%;"></div>
<div class="a t" style="left:504.5px;top:349px;height:15px;line-height:15px;font-size:11.4px;color:#7c7c7c;letter-spacing:-0.161px;">All levels</div>
<div class="a" style="left:487.0px;top:444.40000000000003px;width:13px;height:13px;background:#c4c4c4;border-radius:50%;"></div>
<div class="a" style="left:491.0px;top:448.40000000000003px;width:5px;height:5px;background:#fff;border-radius:50%;"></div>
<div class="a t" style="left:504.5px;top:444px;height:15px;line-height:15px;font-size:11.4px;color:#7c7c7c;letter-spacing:-0.336px;">All</div>
<div class="a" style="left:487.0px;top:463.43000000000006px;width:13px;height:13px;background:#fafafa;border:1px solid #c6c6c6;border-radius:50%;"></div>
<div class="a t" style="left:503.8921875px;top:463px;height:15px;line-height:15px;font-size:11.4px;color:#7c7c7c;letter-spacing:-0.750px;">Same</div>
<div class="a" style="left:319.1px;top:444.0px;width:13px;height:13px;background:#0067c0;border-radius:50%;"></div>
<div class="a" style="left:322.85px;top:447.75px;width:5.5px;height:5.5px;background:#fff;border-radius:50%;"></div>
<div class="a" style="left:334px;top:442px;width:43px;height:17px;border:1px dotted #333;"></div>
<div class="a t" style="left:337.0px;top:443px;height:15px;line-height:15px;font-size:11.4px;color:#0e0e0e;letter-spacing:-0.154px;">O<u>b</u>jects</div>
<div class="a" style="left:308px;top:439px;width:79px;height:22.7px;border:5px solid #000;border-bottom-width:4.500px;"></div>
<svg style="left:234px;top:439px" width="76" height="23" viewBox="0 0 76 23"><path d="M4 5.300Q1 5.300 1 8V14Q1 16.800 4 16.800H35.500L37.500 20.300Q41 21.300 48 19L74.500 11L48 3Q41 1.200 37.500 2L35.500 5.300Z" fill="#000"/></svg>
<div class="a" style="left:452px;top:495px;width:73px;height:20px;background:#fff;"></div>
<div class="a t" style="left:479.840625px;top:498px;height:15px;line-height:15px;font-size:11.4px;color:#0e0e0e;letter-spacing:-0.750px;">OK</div>
<div class="a" style="left:447px;top:491px;width:82px;height:28px;border:5px solid #000;"></div>
<div class="a" style="left:535px;top:494px;width:74px;height:22px;background:#fbfbfb;border:1px solid #d4d4d4;border-bottom-color:#c4c4c4;border-radius:4.500px;"></div>
<div class="a t" style="left:555.3px;top:498px;height:15px;line-height:15px;font-size:11.4px;color:#0e0e0e;letter-spacing:-0.354px;">Cancel</div>
<svg style="left:376px;top:493.500px" width="78" height="22" viewBox="0 0 78 22"><path d="M4 5Q1.400 5 1.400 8V13.500Q1.400 16.500 4 16.500H36.500L39 20Q43 20.800 50 18.500L77 11.300L50 3.500Q43 1.300 39 2L36.500 5Z" fill="#000"/></svg>
<svg style="left:0;top:0" width="698" height="631" viewBox="0 0 698 631"><defs><linearGradient id="shb" gradientUnits="userSpaceOnUse" x1="0" y1="612" x2="0" y2="631"><stop offset="0" stop-color="#efefef"/><stop offset=".5" stop-color="#e4e4e4"/><stop offset=".8" stop-color="#adadad"/><stop offset="1" stop-color="#cdcdcd"/></linearGradient></defs>
<path fill-rule="evenodd" fill="#efefef" d="M0 0H698V631H0Z M9.400 1.700H688A7.500 7.500 0 0 1 695.500 9.200V619.300A7.500 7.500 0 0 1 688 626.800H9.400A7.500 7.500 0 0 1 1.900 619.300V9.200A7.500 7.500 0 0 1 9.400 1.700Z"/>
<path fill-rule="evenodd" fill="url(#shb)" d="M0 612H698V631H0Z M1.900 612H695.500V619.300A7.500 7.500 0 0 1 688 626.800H9.400A7.500 7.500 0 0 1 1.900 619.300Z"/>
<path fill="none" stroke="#6e6e6e" stroke-width="1" d="M9.400 1.700H688A7.500 7.500 0 0 1 695.500 9.200V619.300A7.500 7.500 0 0 1 688 626.800H9.400A7.500 7.500 0 0 1 1.900 619.300V9.200A7.500 7.500 0 0 1 9.400 1.700Z" opacity=".85"/>
</svg>
</div>
</body></html>
